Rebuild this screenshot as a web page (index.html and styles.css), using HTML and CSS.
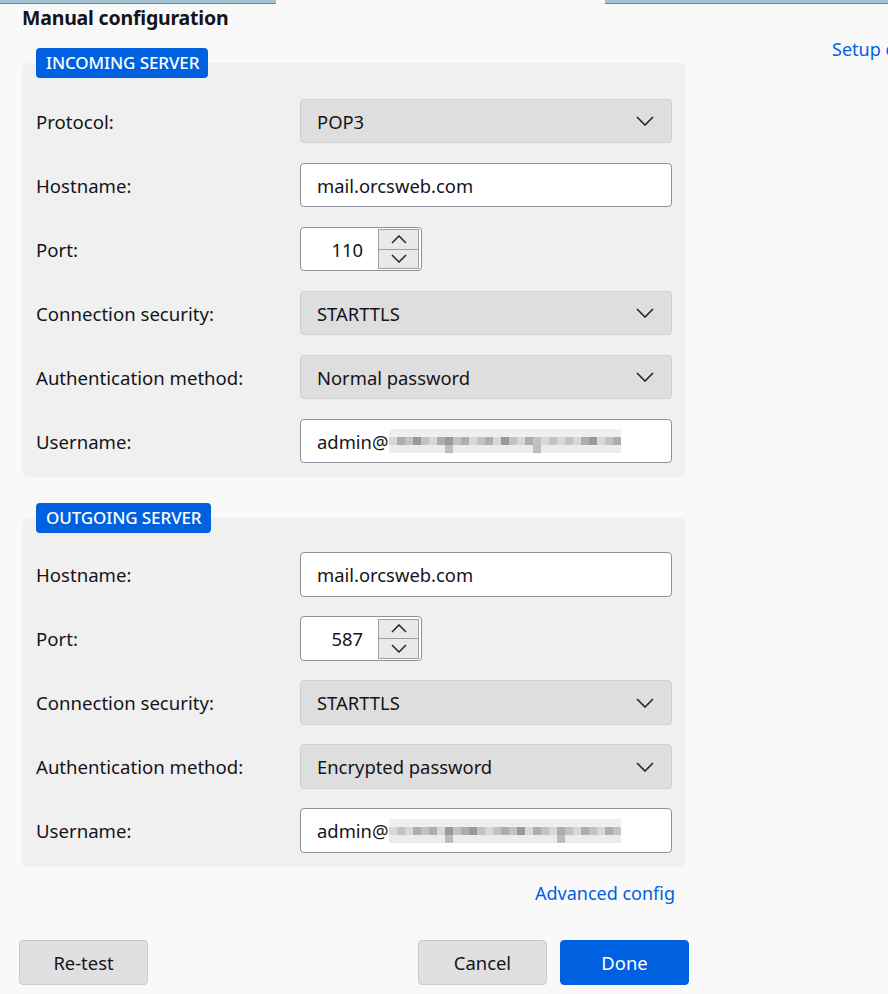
FILE: index.html
```html
<!DOCTYPE html>
<html>
<head>
<meta charset="utf-8">
<link rel="stylesheet" href="styles.css">
</head>
<body>
<div class="topbars"><div class="tab tab-l"></div><div class="tab tab-r"></div></div>
<div class="page">
  <div class="main">
    <h1 class="title">Manual configuration</h1>

    <section class="group group-in">
      <div class="badge">INCOMING SERVER</div>
      <div class="panel">
        <div class="row"><label class="lbl">Protocol:</label><div class="select"><span>POP3</span><svg class="chev" width="18" height="10" viewBox="0 0 18 10"><polyline points="1,1 9,9 17,1"/></svg></div></div>
        <div class="row"><label class="lbl">Hostname:</label><div class="input">mail.orcsweb.com</div></div>
        <div class="row"><label class="lbl">Port:</label><div class="number"><span class="num">110</span><div class="spin"><div class="sbtn"><svg width="16" height="9" viewBox="0 0 16 9"><polyline points="1,8 8,1 15,8"/></svg></div><div class="sbtn"><svg width="16" height="9" viewBox="0 0 16 9"><polyline points="1,1 8,8 15,1"/></svg></div></div></div></div>
        <div class="row"><label class="lbl">Connection security:</label><div class="select"><span>STARTTLS</span><svg class="chev" width="18" height="10" viewBox="0 0 18 10"><polyline points="1,1 9,9 17,1"/></svg></div></div>
        <div class="row"><label class="lbl">Authentication method:</label><div class="select"><span>Normal password</span><svg class="chev" width="18" height="10" viewBox="0 0 18 10"><polyline points="1,1 9,9 17,1"/></svg></div></div>
        <div class="row"><label class="lbl">Username:</label><div class="input">admin@<span class="blur"><i class="c1"></i><i class="c3"></i><i class="c2"></i><i class="c4"></i><i class="c2"></i><i class="c1"></i><i class="c3"></i><i class="c4 low"></i><i class="c2"></i><i class="c3"></i><i class="c1"></i><i class="c2"></i><i class="c3"></i><i class="c1"></i><i class="c4"></i><i class="c2"></i><i class="c1"></i><i class="c3"></i><i class="c2 low"></i><i class="c1"></i><i class="c2"></i><i class="c1"></i><i class="c2"></i><i class="c1"></i><i class="c3"></i><i class="c4"></i><i class="c1"></i><i class="c2"></i><i class="c3"></i></span></div></div>
      </div>
    </section>

    <section class="group group-out">
      <div class="badge">OUTGOING SERVER</div>
      <div class="panel">
        <div class="row"><label class="lbl">Hostname:</label><div class="input">mail.orcsweb.com</div></div>
        <div class="row"><label class="lbl">Port:</label><div class="number"><span class="num">587</span><div class="spin"><div class="sbtn"><svg width="16" height="9" viewBox="0 0 16 9"><polyline points="1,8 8,1 15,8"/></svg></div><div class="sbtn"><svg width="16" height="9" viewBox="0 0 16 9"><polyline points="1,1 8,8 15,1"/></svg></div></div></div></div>
        <div class="row"><label class="lbl">Connection security:</label><div class="select"><span>STARTTLS</span><svg class="chev" width="18" height="10" viewBox="0 0 18 10"><polyline points="1,1 9,9 17,1"/></svg></div></div>
        <div class="row"><label class="lbl">Authentication method:</label><div class="select"><span>Encrypted password</span><svg class="chev" width="18" height="10" viewBox="0 0 18 10"><polyline points="1,1 9,9 17,1"/></svg></div></div>
        <div class="row"><label class="lbl">Username:</label><div class="input">admin@<span class="blur"><i class="c1"></i><i class="c2"></i><i class="c1"></i><i class="c3"></i><i class="c2"></i><i class="c3"></i><i class="c1"></i><i class="c4 low"></i><i class="c2"></i><i class="c3"></i><i class="c4"></i><i class="c2"></i><i class="c1"></i><i class="c2"></i><i class="c3"></i><i class="c2"></i><i class="c4"></i><i class="c1"></i><i class="c3"></i><i class="c2"></i><i class="c1"></i><i class="c3 low"></i><i class="c2"></i><i class="c1"></i><i class="c3"></i><i class="c2"></i><i class="c1"></i><i class="c3"></i><i class="c2"></i></span></div></div>
      </div>
    </section>

    <div class="adv"><a class="link">Advanced config</a></div>

    <div class="buttons">
      <button class="btn">Re-test</button>
      <div class="right-btns">
        <button class="btn">Cancel</button>
        <button class="btn primary">Done</button>
      </div>
    </div>
  </div>
  <div class="aside"><a class="link setup">Setup d</a></div>
</div>
</body>
</html>
```

FILE: styles.css
```css
html, body {
  margin: 0;
  padding: 0;
}
body {
  background: #f9f9f9;
  font-family: "Noto Sans", "Open Sans", sans-serif;
  color: #15141a;
  width: 888px;
  height: 994px;
  overflow: hidden;
}
.topbars {
  display: flex;
  height: 4px;
}
.tab {
  height: 3px;
  background: #a4c3d5;
  border-bottom: 1px solid #6f8796;
}
.tab-l { width: 276px; }
.tab-r { margin-left: 329px; flex: 1; }

.page {
  display: flex;
}
.main {
  margin-left: 22px;
  width: 664px;
  flex: none;
}
.aside {
  margin-left: 146px;
  padding-top: 33px;
  white-space: nowrap;
}
.title {
  margin: 2px 0 0 0;
  font-size: 19.5px;
  line-height: 24px;
  font-weight: 700;
  letter-spacing: -0.2px;
}
.link {
  color: #0061e0;
  font-size: 18px;
  text-decoration: none;
}
.group {
  position: relative;
  padding-top: 15px;
}
.group-in { margin-top: 18px; }
.group-out { margin-top: 26px; }
.badge {
  position: absolute;
  top: 0;
  left: 14px;
  height: 30px;
  line-height: 30px;
  padding: 0 9px 0 10px;
  background: #0061e0;
  color: #fff;
  border-radius: 4px;
  font-size: 17px;
  font-weight: 500;
  letter-spacing: -0.1px;
  z-index: 1;
}
.panel {
  background: #f0f0f0;
  border-radius: 6px;
  padding: 36px 14px 14px 14px;
  display: flex;
  flex-direction: column;
  gap: 20px;
}
.group-out .panel { padding-top: 34px; gap: 19px; }
.row {
  display: flex;
  align-items: center;
  height: 44px;
}
.group-out .row { height: 45px; }
.lbl {
  width: 264px;
  flex: none;
  font-size: 18.6px;
}
.select, .input {
  box-sizing: border-box;
  width: 372px;
  height: 44px;
  border-radius: 4px;
  display: flex;
  align-items: center;
  padding: 0 16px;
  font-size: 18.4px;
}
.group-out .select, .group-out .input, .group-out .number { height: 45px; }
.select {
  background: #dedede;
  border: 1px solid #cfcfcf;
  justify-content: space-between;
}
.chev {
  fill: none;
  stroke: #2b2a33;
  stroke-width: 1.7;
  margin-right: 1px;
}
.input {
  background: #fff;
  border: 1.5px solid #8f8f9d;
}
.blur {
  display: inline-flex;
  align-items: center;
  height: 24px;
  margin-left: 1px;
}
.blur i {
  display: block;
  width: 8px;
  height: 8px;
  background: #d2d2d2;
  box-shadow: 0 -8px 0 #efefef, 0 8px 0 #ececec;
}
.blur i.c1 { background: #d8d8d8; }
.blur i.c2 { background: #c2c2c2; }
.blur i.c3 { background: #adadad; }
.blur i.c4 { background: #9a9a9a; }
.blur i.low { box-shadow: 0 -8px 0 #efefef, 0 8px 0 #bcbcbc; }

.number {
  box-sizing: border-box;
  width: 122px;
  height: 44px;
  background: #fff;
  border: 1.5px solid #8f8f9d;
  border-radius: 4px;
  display: flex;
  align-items: center;
  padding: 0 2px 0 0;
}
.num {
  flex: 1;
  text-align: right;
  padding-right: 15px;
  font-size: 18.4px;
}
.spin {
  width: 41px;
  height: 40px;
  display: flex;
  flex-direction: column;
  border: 1px solid #a0a0a0;
  box-sizing: border-box;
  background: #e9e9e9;
}
.sbtn {
  flex: 1;
  display: flex;
  align-items: center;
  justify-content: center;
}
.sbtn + .sbtn { border-top: 1px solid #a0a0a0; }
.sbtn svg {
  fill: none;
  stroke: #2b2a33;
  stroke-width: 1.6;
}

.adv {
  display: flex;
  justify-content: flex-end;
  padding-right: 11px;
  margin-top: 13px;
  height: 26px;
  line-height: 26px;
}
.buttons {
  margin-top: 34px;
  margin-left: -3px;
  width: 670px;
  display: flex;
  justify-content: space-between;
}
.right-btns {
  display: flex;
  gap: 13px;
}
.btn {
  width: 129px;
  height: 45px;
  box-sizing: border-box;
  border: 1px solid #cbcbcb;
  background: #e0e0e0;
  border-radius: 4px;
  font-family: "Noto Sans", "Open Sans", sans-serif;
  font-size: 18.4px;
  color: #15141a;
  padding: 0;
}
.btn.primary {
  background: #0061e0;
  border-color: #0061e0;
  color: #fff;
}
```
